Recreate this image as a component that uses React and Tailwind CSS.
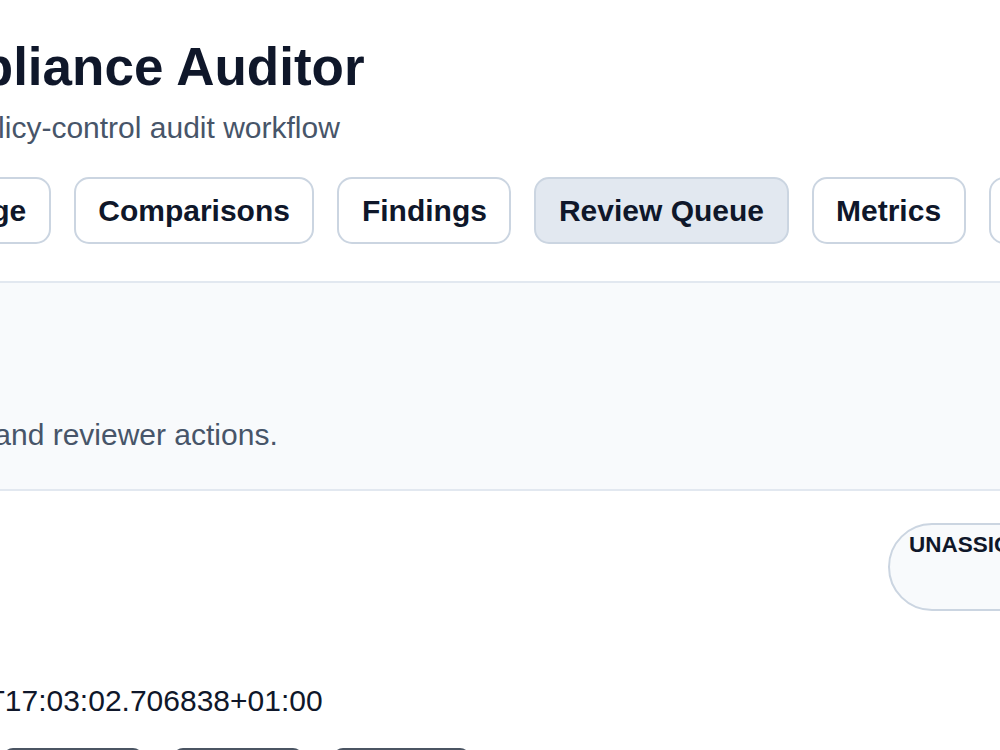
import React from "react";

const tabs = ["Coverage", "Comparisons", "Findings", "Review Queue", "Metrics", "Exports"];

export default function App() {
  return (
    <div className="w-[1000px] h-[750px] overflow-hidden bg-white" style={{ fontFamily: '"Liberation Sans", Arial, sans-serif' }}>
      <div className="-ml-[167px] w-[1600px] pt-[35px]">
        <header className="pl-[30px]">
          <h1 className="text-[53px] leading-[63px] font-bold text-[#0f172a] whitespace-nowrap">Compliance Auditor</h1>
          <p className="mt-[12px] text-[30px] leading-[36px] text-[#475569] whitespace-nowrap">Unified policy-control audit workflow</p>
          <nav className="mt-[31px] ml-[2px] flex gap-[23px]">
            {tabs.map((t) => (
              <button
                key={t}
                className={
                  t === "Review Queue"
                    ? "shrink-0 whitespace-nowrap rounded-[15px] border-2 border-[#cbd5e1] bg-[#e2e8f0] px-[22.5px] py-[13.5px] text-[30px] leading-[36px] font-bold text-[#0f172a]"
                    : "shrink-0 whitespace-nowrap rounded-[15px] border-2 border-[#cbd5e1] bg-white px-[22.5px] py-[13.5px] text-[30px] leading-[36px] font-bold text-[#0f172a]"
                }
              >
                {t}
              </button>
            ))}
          </nav>
        </header>

        <section className="mt-[37px] border-y-2 border-[#e2e8f0] bg-[#f8fafc] pl-[69px] pt-[133.5px] pb-[36.5px]">
          <p className="text-[30px] leading-[36px] text-[#475569] whitespace-nowrap">Triage and reviewer actions.</p>
        </section>

        <div className="mt-[32px] flex items-start">
          <div className="w-[1055px] shrink-0 pt-[160px]">
            <p className="text-[30px] leading-[36px] text-[#0f172a] whitespace-nowrap">2024-03-18T17:03:02.706838+01:00</p>
            <div className="mt-[29px] flex gap-[30px]">
              <button className="w-[140px] h-[60px] shrink-0 rounded-[10px] border-2 border-[#4b5563] bg-white text-[26px] font-bold text-[#0f172a]">Open</button>
              <button className="w-[140px] h-[60px] shrink-0 rounded-[10px] border-2 border-[#4b5563] bg-white text-[26px] font-bold text-[#0f172a]">Claim</button>
              <button className="w-[130px] h-[60px] shrink-0 rounded-[10px] border-2 border-[#4b5563] bg-white text-[26px] font-bold text-[#0f172a]">Assign</button>
              <button className="w-[137px] h-[60px] shrink-0 rounded-[10px] border-2 border-[#4b5563] bg-white text-[26px] font-bold text-[#0f172a]">Resolve</button>
            </div>
          </div>
          <div className="h-[88px] w-[260px] shrink-0 rounded-full border-2 border-[#cbd5e1] bg-[#f8fafc] pl-[19px] pt-[5.5px]">
            <span className="text-[22.5px] leading-[27px] font-bold text-[#0f172a] whitespace-nowrap">UNASSIGNED</span>
          </div>
        </div>
      </div>
    </div>
  );
}
